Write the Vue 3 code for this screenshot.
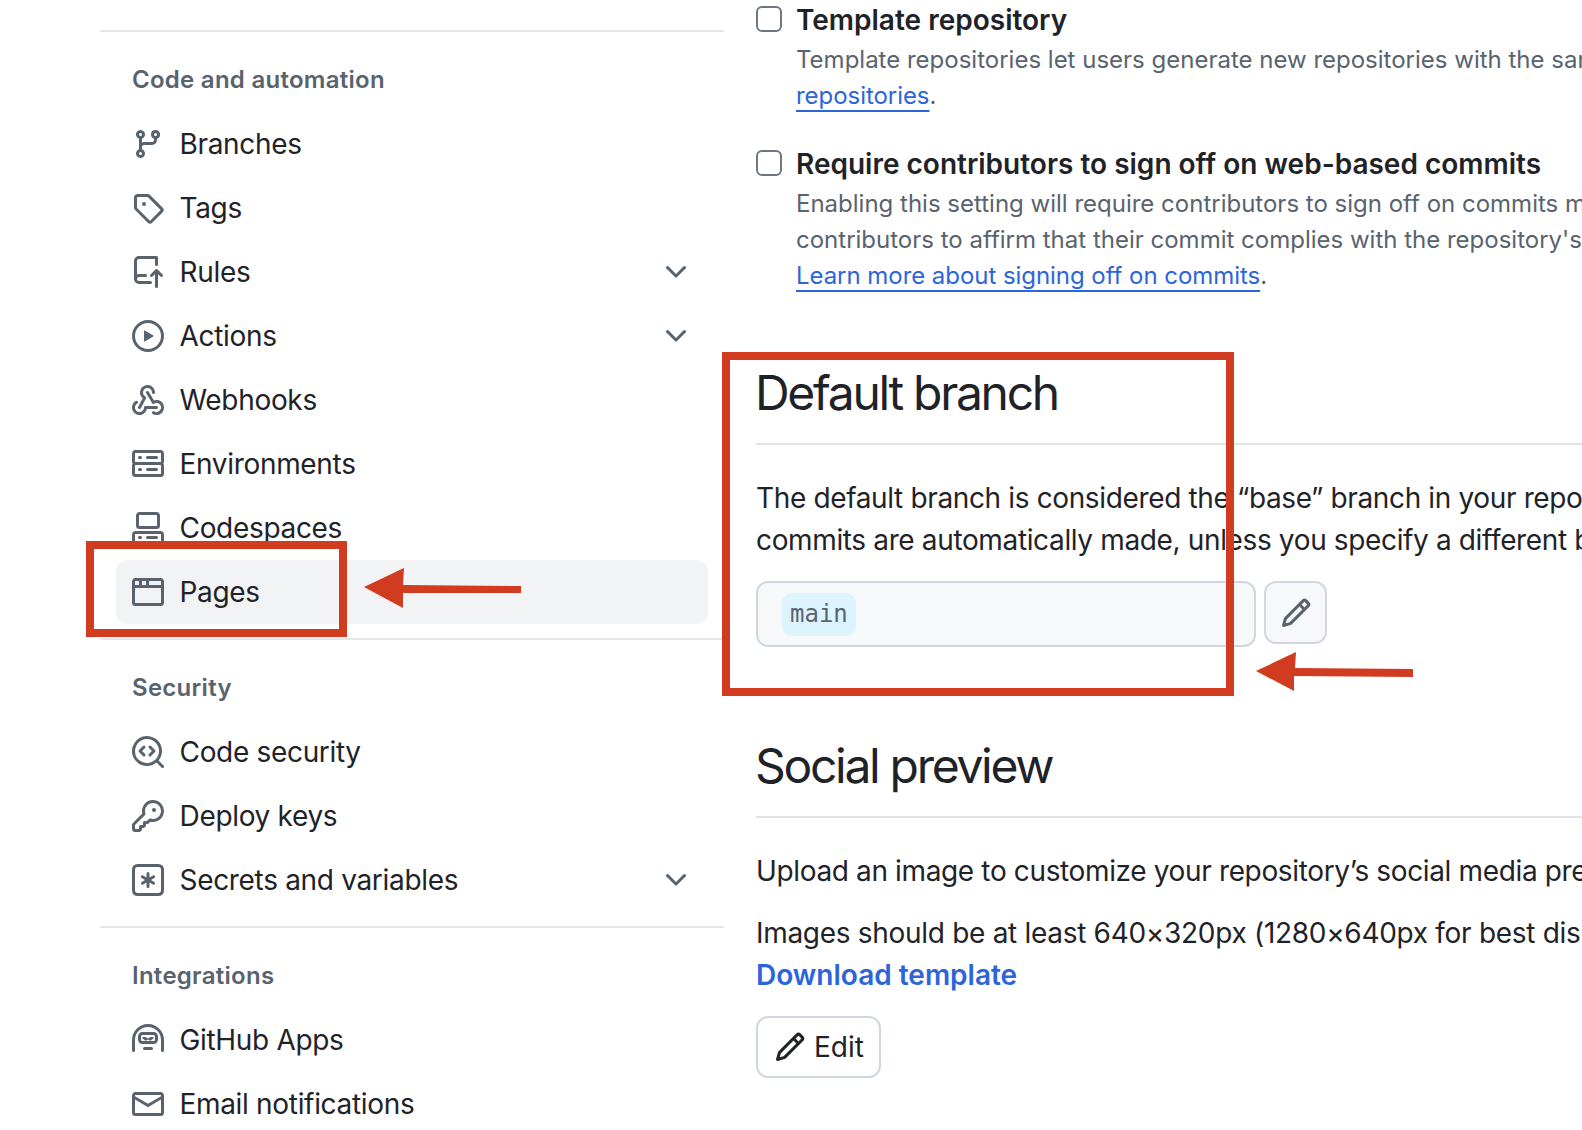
<script setup>
const chevron = 'M12.78 5.22a.749.749 0 0 1 0 1.06l-4.25 4.25a.749.749 0 0 1-1.06 0L3.22 6.28a.749.749 0 1 1 1.06-1.06L8 8.939l3.72-3.719a.749.749 0 0 1 1.06 0Z'
const pencil = 'M11.013 1.427a1.75 1.75 0 0 1 2.474 0l1.086 1.086a1.75 1.75 0 0 1 0 2.474l-8.61 8.61c-.21.21-.47.364-.756.445l-3.251.93a.75.75 0 0 1-.927-.928l.929-3.25c.081-.286.235-.547.445-.758l8.61-8.61Zm.176 4.823L9.75 4.81l-6.286 6.287a.253.253 0 0 0-.064.108l-.558 1.953 1.953-.558a.253.253 0 0 0 .108-.064Zm1.238-3.763a.25.25 0 0 0-.354 0L10.811 3.75l1.439 1.44 1.263-1.263a.25.25 0 0 0 0-.354Z'

const sections = [
  {
    title: 'Code and automation',
    items: [
      { label: 'Branches', d: ['M9.5 3.25a2.25 2.25 0 1 1 3 2.122V6A2.5 2.5 0 0 1 10 8.5H6a1 1 0 0 0-1 1v1.128a2.251 2.251 0 1 1-1.5 0V5.372a2.25 2.25 0 1 1 1.5 0v1.836A2.493 2.493 0 0 1 6 7h4a1 1 0 0 0 1-1v-.628A2.25 2.25 0 0 1 9.5 3.25Zm-6 0a.75.75 0 1 0 1.5 0 .75.75 0 0 0-1.5 0Zm8.25-.75a.75.75 0 1 0 0 1.5.75.75 0 0 0 0-1.5ZM4.25 12a.75.75 0 1 0 0 1.5.75.75 0 0 0 0-1.5Z'] },
      { label: 'Tags', d: ['M1 7.775V2.75C1 1.784 1.784 1 2.75 1h5.025c.464 0 .91.184 1.238.513l6.25 6.25a1.75 1.75 0 0 1 0 2.474l-5.026 5.026a1.75 1.75 0 0 1-2.474 0l-6.25-6.25A1.75 1.75 0 0 1 1 7.775Zm1.5 0c0 .066.026.13.073.177l6.25 6.25a.25.25 0 0 0 .354 0l5.025-5.025a.25.25 0 0 0 0-.354l-6.25-6.25a.25.25 0 0 0-.177-.073H2.75a.25.25 0 0 0-.25.25ZM6 5a1 1 0 1 1 0 2 1 1 0 0 1 0-2Z'] },
      { label: 'Rules', chevron: true, d: ['M1 2.5A2.5 2.5 0 0 1 3.5 0h8.75a.75.75 0 0 1 .75.75v3.5a.75.75 0 0 1-1.5 0V1.5h-8a1 1 0 0 0-1 1v6.708A2.486 2.486 0 0 1 3.5 9h3.25a.75.75 0 0 1 0 1.5H3.5a1 1 0 0 0 0 2h5.75a.75.75 0 0 1 0 1.5H3.5A2.5 2.5 0 0 1 1 11.5Zm13.23 7.79h-.001l-1.224-1.224v6.184a.75.75 0 0 1-1.5 0V9.066L10.28 10.29a.75.75 0 0 1-1.06-1.061l2.505-2.504a.75.75 0 0 1 1.06 0L15.29 9.23a.751.751 0 0 1-.018 1.042.751.751 0 0 1-1.042.018Z'] },
      { label: 'Actions', chevron: true, d: ['M8 0a8 8 0 1 1 0 16A8 8 0 0 1 8 0ZM1.5 8a6.5 6.5 0 1 0 13 0 6.5 6.5 0 0 0-13 0Zm4.879-2.773 4.264 2.559a.25.25 0 0 1 0 .428l-4.264 2.559A.25.25 0 0 1 6 10.559V5.442a.25.25 0 0 1 .379-.215Z'] },
      { label: 'Webhooks', d: ['M5.5 4.25a2.25 2.25 0 0 1 4.5 0 .75.75 0 0 0 1.5 0 3.75 3.75 0 1 0-6.14 2.889l-2.272 4.258a.75.75 0 0 0 1.324.706L7 7.25a.75.75 0 0 0-.309-1.015A2.25 2.25 0 0 1 5.5 4.25Z', 'M7.364 3.607a.75.75 0 0 1 1.03.257l2.608 4.349a3.75 3.75 0 1 1-.628 6.785.75.75 0 0 1 .752-1.299 2.25 2.25 0 1 0-.033-3.88.75.75 0 0 1-1.03-.256L7.107 4.636a.75.75 0 0 1 .257-1.03Z', 'M2.9 8.776A.75.75 0 0 1 2.625 9.8 2.25 2.25 0 1 0 6 11.75a.75.75 0 0 1 .75-.751h5.5a.75.75 0 0 1 0 1.5H7.425a3.751 3.751 0 1 1-5.55-3.998.75.75 0 0 1 1.024.274Z'] },
      { label: 'Environments', d: ['M1.75 1h12.5c.966 0 1.75.784 1.75 1.75v4c0 .372-.116.717-.314 1 .198.283.314.628.314 1v4a1.75 1.75 0 0 1-1.75 1.75H1.75A1.75 1.75 0 0 1 0 12.75v-4c0-.358.109-.707.314-1a1.739 1.739 0 0 1-.314-1v-4C0 1.784.784 1 1.75 1ZM1.5 2.75v4c0 .138.112.25.25.25h12.5a.25.25 0 0 0 .25-.25v-4a.25.25 0 0 0-.25-.25H1.75a.25.25 0 0 0-.25.25Zm.25 5.75a.25.25 0 0 0-.25.25v4c0 .138.112.25.25.25h12.5a.25.25 0 0 0 .25-.25v-4a.25.25 0 0 0-.25-.25ZM7 4.75A.75.75 0 0 1 7.75 4h4.5a.75.75 0 0 1 0 1.5h-4.5A.75.75 0 0 1 7 4.75ZM7.75 10h4.5a.75.75 0 0 1 0 1.5h-4.5a.75.75 0 0 1 0-1.5ZM3 4.75A.75.75 0 0 1 3.75 4h.5a.75.75 0 0 1 0 1.5h-.5A.75.75 0 0 1 3 4.75ZM3.75 10h.5a.75.75 0 0 1 0 1.5h-.5a.75.75 0 0 1 0-1.5Z'] },
      { label: 'Codespaces', d: ['M0 11.25c0-.966.784-1.75 1.75-1.75h12.5c.966 0 1.75.784 1.75 1.75v3A1.75 1.75 0 0 1 14.25 16H1.75A1.75 1.75 0 0 1 0 14.25Zm2-9.5C2 .784 2.784 0 3.75 0h8.5C13.216 0 14 .784 14 1.75v5a1.75 1.75 0 0 1-1.75 1.75h-8.5A1.75 1.75 0 0 1 2 6.75Zm1.75-.25a.25.25 0 0 0-.25.25v5c0 .138.112.25.25.25h8.5a.25.25 0 0 0 .25-.25v-5a.25.25 0 0 0-.25-.25Zm-2 9.5a.25.25 0 0 0-.25.25v3c0 .138.112.25.25.25h12.5a.25.25 0 0 0 .25-.25v-3a.25.25 0 0 0-.25-.25Z', 'M7 12.75a.75.75 0 0 1 .75-.75h4.5a.75.75 0 0 1 0 1.5h-4.5a.75.75 0 0 1-.75-.75Zm-4 0a.75.75 0 0 1 .75-.75h.5a.75.75 0 0 1 0 1.5h-.5a.75.75 0 0 1-.75-.75Z'] },
      { label: 'Pages', active: true, d: ['M0 2.75C0 1.784.784 1 1.75 1h12.5c.966 0 1.75.784 1.75 1.75v10.5A1.75 1.75 0 0 1 14.25 15H1.75A1.75 1.75 0 0 1 0 13.25ZM14.5 6h-13v7.25c0 .138.112.25.25.25h12.5a.25.25 0 0 0 .25-.25Zm-6-3.5v2h6V2.75a.25.25 0 0 0-.25-.25ZM5 2.5v2h2v-2Zm-3.25 0a.25.25 0 0 0-.25.25V4.5h2v-2Z'] },
    ],
  },
  {
    title: 'Security',
    items: [
      { label: 'Code security', d: ['M8.47 4.97a.75.75 0 0 0 0 1.06L9.94 7.5 8.47 8.97a.75.75 0 1 0 1.06 1.06l2-2a.75.75 0 0 0 0-1.06l-2-2a.75.75 0 0 0-1.06 0ZM6.53 6.03a.75.75 0 0 0-1.06-1.06l-2 2a.75.75 0 0 0 0 1.06l2 2a.75.75 0 1 0 1.06-1.06L5.06 7.5l1.47-1.47Z', 'M12.246 13.307a7.501 7.501 0 1 1 1.06-1.06l2.474 2.473a.749.749 0 0 1-.326 1.275.749.749 0 0 1-.734-.215ZM1.5 7.5a6.002 6.002 0 0 0 3.608 5.504 6.002 6.002 0 0 0 6.486-1.117.748.748 0 0 1 .292-.293A6 6 0 1 0 1.5 7.5Z'] },
      { label: 'Deploy keys', d: ['M10.5 0a5.499 5.499 0 1 1-1.288 10.848l-.932.932a.749.749 0 0 1-.53.22H7v.75a.749.749 0 0 1-.22.53l-.5.5a.749.749 0 0 1-.53.22H5v.75a.749.749 0 0 1-.22.53l-.5.5a.749.749 0 0 1-.53.22h-2A1.75 1.75 0 0 1 0 14.25v-2c0-.199.079-.389.22-.53l4.932-4.932A5.5 5.5 0 0 1 10.5 0Zm-4 5.5c-.001.431.069.86.205 1.269a.75.75 0 0 1-.181.768L1.5 12.56v1.69c0 .138.112.25.25.25h1.69l.06-.06v-1.19a.75.75 0 0 1 .75-.75h1.19l.06-.06v-1.19a.75.75 0 0 1 .75-.75h1.19l1.023-1.025a.75.75 0 0 1 .768-.18A4 4 0 1 0 6.5 5.5ZM11 6a1 1 0 1 1 0-2 1 1 0 0 1 0 2Z'] },
      { label: 'Secrets and variables', chevron: true, d: ['M0 2.75A2.75 2.75 0 0 1 2.75 0h10.5A2.75 2.75 0 0 1 16 2.75v10.5A2.75 2.75 0 0 1 13.25 16H2.75A2.75 2.75 0 0 1 0 13.25ZM2.75 1.5c-.69 0-1.25.56-1.25 1.25v10.5c0 .69.56 1.25 1.25 1.25h10.5c.69 0 1.25-.56 1.25-1.25V2.75c0-.69-.56-1.25-1.25-1.25Z', 'M8 4a.75.75 0 0 1 .75.75V6.7l1.69-.975a.75.75 0 0 1 .75 1.3L9.5 8l1.69.976a.75.75 0 0 1-.75 1.298L8.75 9.3v1.951a.75.75 0 0 1-1.5 0V9.299l-1.69.975a.75.75 0 0 1-.75-1.298L6.5 8l-1.69-.975a.75.75 0 0 1 .75-1.3l1.69.976V4.75A.75.75 0 0 1 8 4Z'] },
    ],
  },
  {
    title: 'Integrations',
    items: [
      { label: 'GitHub Apps', d: ['M0 8a8 8 0 0 1 16 0v5.25a.75.75 0 0 1-1.5 0V8a6.5 6.5 0 1 0-13 0v5.25a.75.75 0 0 1-1.5 0Z', 'M3 6.25A2.25 2.25 0 0 1 5.25 4h5.5A2.25 2.25 0 0 1 13 6.25v1.5A2.25 2.25 0 0 1 10.75 10h-5.5A2.25 2.25 0 0 1 3 7.75Zm2.25-.75a.75.75 0 0 0-.75.75v1.5c0 .414.336.75.75.75h5.5a.75.75 0 0 0 .75-.75v-1.5a.75.75 0 0 0-.75-.75Z', 'M5.25 6.5h1.5l1.25.75 1.25-.75h1.5v.6L9.5 8.3H8.8L8 7.8l-.8.5h-.7L5.25 7.1Z', 'M6.25 11.5h3.5a.75.75 0 0 1 0 1.5h-3.5a.75.75 0 0 1 0-1.5Z'] },
      { label: 'Email notifications', d: ['M1.75 2h12.5c.966 0 1.75.784 1.75 1.75v8.5A1.75 1.75 0 0 1 14.25 14H1.75A1.75 1.75 0 0 1 0 12.25v-8.5C0 2.784.784 2 1.75 2ZM1.5 12.251c0 .138.112.25.25.25h12.5a.25.25 0 0 0 .25-.25V5.809L8.38 9.397a.75.75 0 0 1-.76 0L1.5 5.809v6.442Zm13-8.181v-.32a.25.25 0 0 0-.25-.25H1.75a.25.25 0 0 0-.25.25v.32L8 7.88Z'] },
    ],
  },
]
</script>

<template>
  <div class="page">
    <aside class="sidebar">
      <section v-for="section in sections" :key="section.title" class="section">
        <h3 class="section-title">{{ section.title }}</h3>
        <a v-for="item in section.items" :key="item.label" class="nav-row" :class="{ active: item.active }">
          <svg class="icon" viewBox="0 0 16 16"><path v-for="(p, i) in item.d" :key="i" :d="p" /></svg>
          <span class="nav-label">{{ item.label }}</span>
          <svg v-if="item.chevron" class="icon chevron" viewBox="0 0 16 16"><path :d="chevron" /></svg>
        </a>
      </section>
    </aside>

    <main class="main">
      <div class="check-row">
        <span class="checkbox"></span>
        <div>
          <div class="check-title">Template repository</div>
          <p class="check-desc">Template repositories let users generate new repositories with the same directory structure and files. Learn more about template<br><a class="link">repositories</a>.</p>
        </div>
      </div>
      <div class="check-row second">
        <span class="checkbox"></span>
        <div>
          <div class="check-title">Require contributors to sign off on web-based commits</div>
          <p class="check-desc">Enabling this setting will require contributors to sign off on commits made through GitHub’s web interface. Signing off is a way for<br>contributors to affirm that their commit complies with the repository's terms, commonly the Developer Certificate of Origin.<br><a class="link">Learn more about signing off on commits</a>.</p>
        </div>
      </div>

      <h2 class="heading branch-heading">Default branch</h2>
      <p class="para para-first">The default branch is considered the “base” branch in your repository, against which all pull requests and code<br>commits are automatically made, unless you specify a different branch.</p>
      <div class="branch-row">
        <div class="branch-input"><code class="branch-pill">main</code></div>
        <button class="pencil-btn"><svg class="icon" viewBox="0 0 16 16"><path :d="pencil" /></svg></button>
      </div>

      <h2 class="heading social-heading">Social preview</h2>
      <p class="para para-first">Upload an image to customize your repository’s social media preview.</p>
      <p class="para para-next">Images should be at least 640×320px (1280×640px for best display).<br><a class="download">Download template</a></p>
      <button class="edit-btn"><svg class="icon" viewBox="0 0 16 16"><path :d="pencil" /></svg>Edit</button>
    </main>

    <div class="mark mark-pages"></div>
    <div class="mark mark-branch"></div>
    <svg class="arrows" viewBox="0 0 1582 1130">
      <polygon points="364,587 404,568 403,585 521,586 521,593 403,593 403,608" />
      <polygon points="1256,671 1296,652 1295,668 1413,669 1413,677 1294,676 1294,691" />
    </svg>
  </div>
</template>

<style>
html, body { margin: 0; background: #fff; overflow: hidden; }
</style>

<style scoped>
.page {
  position: relative;
  display: flex;
  width: 1582px;
  height: 1130px;
  overflow: hidden;
  background: #fff;
  color: #1f2328;
  font-family: Inter, "Noto Sans", sans-serif;
  font-size: 28px;
}
.sidebar { flex: none; width: 624px; margin-left: 100px; padding-top: 30px; }
.section { border-top: 2px solid #e3e6ea; padding-bottom: 14px; }
.section-title {
  margin: 0;
  height: 80px;
  padding: 32px 0 0 32px;
  box-sizing: border-box;
  font-size: 24px;
  line-height: 32px;
  font-weight: 600;
  letter-spacing: 0.27px;
  color: #59636e;
}
.nav-row {
  display: flex;
  align-items: center;
  height: 64px;
  margin: 0 16px;
  padding: 0 16px;
  border-radius: 12px;
}
.nav-row.active { background: #f1f3f5; }
.icon { flex: none; width: 32px; height: 32px; fill: #59636e; }
.nav-label { margin-left: 15.5px; line-height: 40px; letter-spacing: -0.32px; white-space: nowrap; }
.chevron { margin-left: auto; }

.main { flex: none; width: 826px; margin-left: 32px; white-space: nowrap; }
.check-row { display: flex; gap: 14px; }
.check-row.second { margin-top: 30px; }
.checkbox {
  flex: none;
  width: 26px;
  height: 26px;
  box-sizing: border-box;
  margin-top: 6px;
  border: 2px solid #6e7781;
  border-radius: 6px;
  background: #fff;
}
.check-title { font-size: 28px; line-height: 40px; font-weight: 600; }
.check-desc { margin: 2px 0 0; font-size: 24px; line-height: 36px; color: #59636e; }
.link {
  color: #2c65d9;
  letter-spacing: -0.05px;
  text-decoration: underline;
  text-decoration-thickness: 2px;
  text-underline-offset: 6px;
  text-decoration-skip-ink: none;
}
.heading {
  margin: 0;
  padding-bottom: 20px;
  border-bottom: 2px solid #dfe3e8;
  font-size: 48px;
  line-height: 60px;
  font-weight: 400;
  letter-spacing: -2.3px;
  text-indent: -1px;
  width: 1000px;
}
.branch-heading { margin-top: 69px; }
.social-heading { margin-top: 89px; }
.para { margin: 0; font-size: 28px; line-height: 42px; letter-spacing: -0.36px; }
.para-first { margin-top: 32px; }
.para-next { margin-top: 20px; letter-spacing: -0.3px; }
.branch-row { display: flex; align-items: flex-start; gap: 8px; margin-top: 20px; }
.branch-input {
  display: flex;
  align-items: flex-start;
  width: 500px;
  height: 66px;
  box-sizing: border-box;
  padding: 10px 24px;
  border: 2px solid #d0d7de;
  border-radius: 12px;
  background: #f6f8fa;
}
.branch-pill {
  padding: 0 8px;
  height: 43px;
  border-radius: 10px;
  background: #ddf4ff;
  font-family: "DejaVu Sans Mono", monospace;
  font-size: 24px;
  line-height: 43px;
  color: #59636e;
}
.pencil-btn {
  display: flex;
  align-items: center;
  justify-content: center;
  width: 63px;
  height: 63px;
  padding: 0;
  box-sizing: border-box;
  border: 2px solid #d0d7de;
  border-radius: 12px;
  background: #f6f8fa;
}
.download { color: #2c65d9; font-weight: 600; letter-spacing: 0; }
.edit-btn {
  display: flex;
  align-items: center;
  gap: 8px;
  width: 125px;
  height: 62px;
  margin-top: 20px;
  padding: 0 0 0 16px;
  box-sizing: border-box;
  border: 2px solid #d0d7de;
  border-radius: 12px;
  background: #fff;
  color: #1f2328;
  font-family: inherit;
  font-size: 28px;
}
.edit-btn .icon { fill: #1f2328; }

.mark { position: absolute; box-sizing: border-box; border: 8px solid #d13b20; }
.mark-pages { left: 86px; top: 541px; width: 261px; height: 96px; }
.mark-branch { left: 722px; top: 352px; width: 512px; height: 344px; }
.arrows { position: absolute; left: 0; top: 0; width: 1582px; height: 1130px; fill: #d13b20; pointer-events: none; }
</style>
